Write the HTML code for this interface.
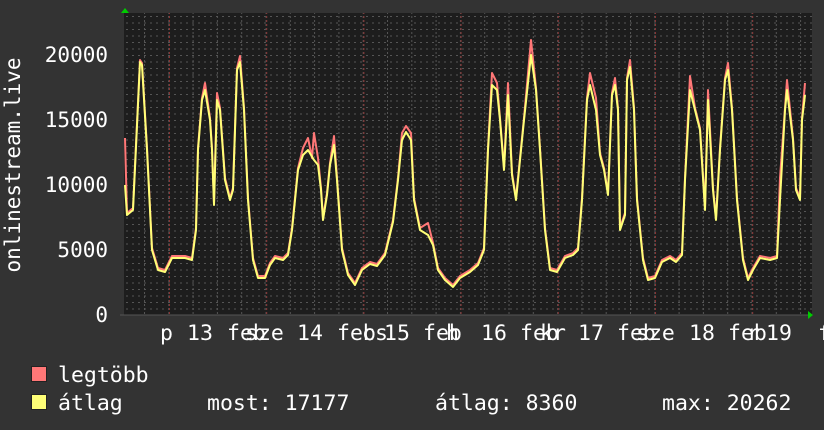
<!DOCTYPE html>
<html><head><meta charset="utf-8"><style>
html,body{margin:0;padding:0;background:#333;width:824px;height:430px;overflow:hidden}
svg text{font-family:"DejaVu Sans Mono","Liberation Mono",monospace;fill:#fff}
</style></head><body>
<svg width="824" height="430" xmlns="http://www.w3.org/2000/svg">
<defs>
<pattern id="hg" x="0" y="3" width="6" height="6.5" patternUnits="userSpaceOnUse">
<rect x="0" y="0" width="2" height="1" fill="#555"/>
</pattern>
<pattern id="vg" x="144" y="0" width="24.3" height="4" patternUnits="userSpaceOnUse">
<rect x="0" y="0" width="1" height="2" fill="#555"/>
</pattern>
<pattern id="vr" x="169" y="0" width="97.2" height="4" patternUnits="userSpaceOnUse">
<rect x="0" y="0" width="1" height="2" fill="#8a3333"/>
</pattern>
</defs>
<rect x="124" y="13" width="688" height="302" fill="#1d1d1d"/>
<rect x="124" y="13" width="688" height="302" fill="url(#hg)"/>
<rect x="140" y="13" width="672" height="302" fill="url(#vg)"/>
<rect x="165" y="13" width="647" height="302" fill="url(#vr)"/>
<line x1="120" y1="315" x2="812" y2="315" fill="none" stroke="#555"/>
<polygon points="121,13 125,8 129,13" fill="#0c0"/>
<polygon points="808,311 813,315 808,319" fill="#0c0"/>
<g font-size="21" text-anchor="end">
<text x="108" y="62">20000</text>
<text x="108" y="127">15000</text>
<text x="108" y="192">10000</text>
<text x="108" y="257">5000</text>
<text x="108" y="322">0</text>
</g>
<text font-size="21" transform="translate(20,165) rotate(-90)" text-anchor="middle">onlinestream.live</text>
<g font-size="21.5">
<text x="160" y="340">p</text><text x="187" y="340">13</text><text x="227" y="340">feb</text><text x="245" y="340">sze</text>
<text x="297" y="340">14</text><text x="337" y="340">feb</text><text x="362" y="340">cs</text>
<text x="384" y="340">15</text><text x="423" y="340">feb</text><text x="446" y="340">h</text>
<text x="481" y="340">16</text><text x="520" y="340">feb</text><text x="540" y="340">kr</text>
<text x="578" y="340">17</text><text x="617" y="340">feb</text><text x="636" y="340">sze</text>
<text x="689" y="340">18</text><text x="728" y="340">feb</text><text x="747" y="340">r</text>
<text x="766" y="340">19</text><text x="818" y="340">f</text>
</g>
<g id="d" fill="none" stroke-width="2" stroke-linejoin="round">
<polyline transform="translate(0,-2)" stroke="#f77" points="125,140 127,215 133,210 140,62 142,65 147,150 152,250 158,270 165,272 172,258 185,258 192,260 196,230 198,150 202,100 205,85 210,120 212,150 214,205 217,95 220,110 225,180 230,200 233,190 237,70 240,58 244,110 248,200 253,260 258,278 265,278 270,265 275,258 283,260 288,255 292,230 298,170 303,150 308,140 312,160 314,135 318,160 321,190 323,220 327,195 330,165 334,138 337,180 342,250 348,275 355,285 362,270 370,264 377,266 385,255 393,222 398,180 402,135 406,128 411,135 414,200 420,230 428,225 433,245 438,270 445,280 453,287 460,278 470,272 478,265 484,250 488,150 492,75 497,85 500,120 504,170 508,85 512,175 516,200 520,160 524,120 531,42 536,90 540,150 545,230 550,270 557,272 565,258 573,255 578,250 582,200 587,100 590,75 596,100 600,155 604,170 608,195 612,95 615,80 618,110 620,230 625,215 627,80 630,62 634,110 637,200 643,260 648,280 655,278 662,262 670,258 676,262 682,255 685,180 690,78 695,110 700,130 705,210 708,92 713,190 716,220 720,150 725,80 728,65 732,110 737,200 743,260 748,280 753,270 760,258 770,260 777,258 780,180 785,110 787,82 793,140 796,190 800,200 802,120 805,85"/>
<polyline stroke="#ff7" points="125,185 127,215 133,210 140,62 142,65 147,150 152,250 158,270 165,272 172,258 185,258 192,260 196,230 198,150 202,100 205,90 210,120 212,150 214,205 217,100 220,110 225,180 230,200 233,190 237,70 240,62 244,110 248,200 253,260 258,278 265,278 270,265 275,258 283,260 288,255 292,230 298,170 303,155 308,150 314,160 318,165 321,190 323,220 327,195 330,165 334,145 337,180 342,250 348,275 355,285 362,270 370,264 377,266 385,255 393,222 398,180 402,140 406,132 411,140 414,200 420,230 428,235 433,245 438,270 445,280 453,287 460,278 470,272 478,265 484,250 488,150 492,85 497,90 500,120 504,170 508,95 512,175 516,200 520,160 524,120 531,55 536,90 540,150 545,230 550,270 557,272 565,258 573,255 578,250 582,200 587,100 590,85 596,110 600,155 604,170 608,195 612,95 615,85 618,110 620,230 625,215 627,80 630,67 634,110 637,200 643,260 648,280 655,278 662,262 670,258 676,262 682,255 685,180 690,90 695,110 700,130 705,210 708,100 713,190 716,220 720,150 725,80 728,70 732,110 737,200 743,260 748,280 753,270 760,258 770,260 777,258 780,200 785,110 787,90 793,140 796,190 800,200 802,120 805,95"/>
</g>
<rect x="31.5" y="366.5" width="15" height="15" fill="#f77" stroke="#222"/>
<rect x="31.5" y="394.5" width="15" height="15" fill="#ff7" stroke="#222"/>
<g font-size="21.5">
<text x="58" y="382">legtöbb</text>
<text x="58" y="410">átlag</text>
<text x="207" y="410">most: 17177</text>
<text x="435" y="410">átlag: 8360</text>
<text x="662" y="410">max: 20262</text>
</g>
</svg>
</body></html>
